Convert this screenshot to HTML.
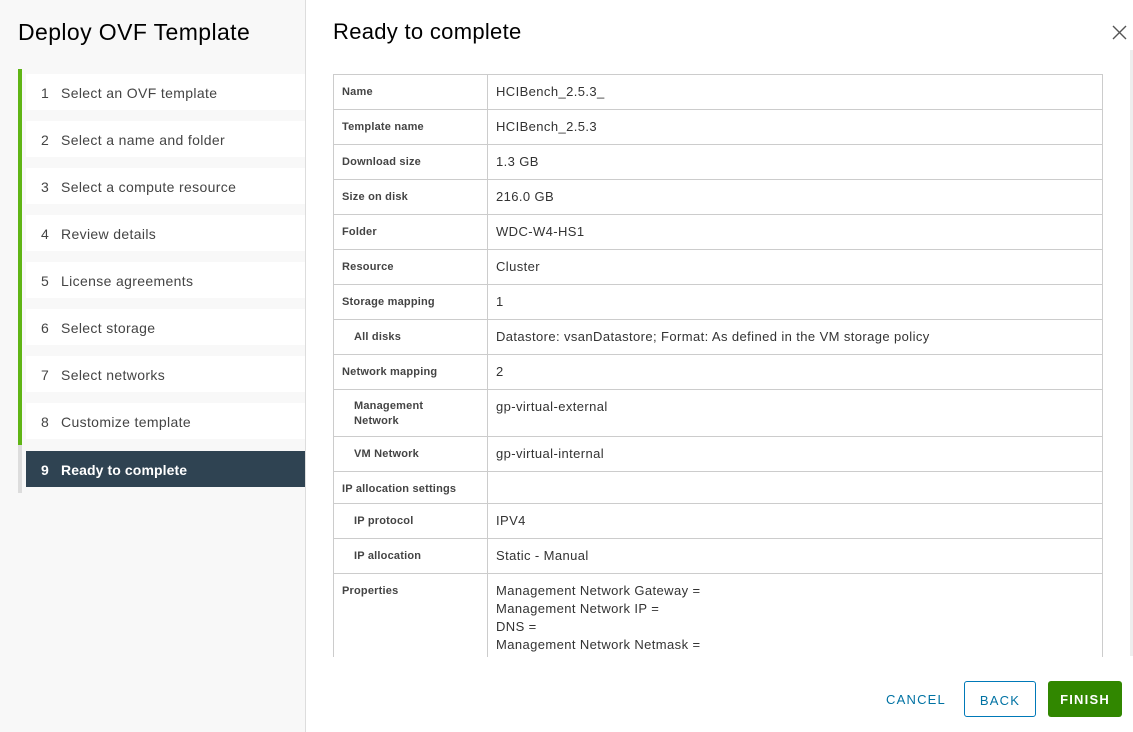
<!DOCTYPE html>
<html><head><style>
*{margin:0;padding:0;box-sizing:border-box}
body{width:1133px;height:732px;overflow:hidden;font-family:"Liberation Sans",sans-serif;background:#fff;position:relative;color:#333}
.left{position:absolute;left:0;top:0;width:306px;height:732px;background:#f8f8f8;border-right:1px solid #ddd}
.left h1{position:absolute;left:18px;top:19px;font-size:23px;font-weight:normal;color:#000;letter-spacing:0.4px}
.bar{position:absolute;left:18px;top:69px;width:4px;height:376px;background:#60b515}
.bar2{position:absolute;left:18px;top:445px;width:4px;height:48px;background:#ddd}
.step{position:absolute;left:26px;width:279px;height:36px;background:#fff;font-size:14px;color:#444;line-height:38px;padding-left:15px;letter-spacing:0.35px}
.step b{font-weight:normal;display:inline-block;width:20px}
.step.act{background:#2f4352;color:#fff;font-weight:bold;letter-spacing:0.1px}
.step.act b{font-weight:bold}
h2{position:absolute;left:333px;top:19px;font-size:22px;font-weight:normal;color:#000;letter-spacing:0.3px}
.x{position:absolute;left:1112px;top:25px}
table{position:absolute;left:333px;top:74px;width:770px;border-collapse:collapse;font-size:13px;letter-spacing:0.4px}
td{border:1px solid #ccc;vertical-align:top;padding:9px 8px 0}
td.l{width:154px;font-size:11px;font-weight:bold;color:#444;padding-top:11px;letter-spacing:0.2px}
td.l.i{padding-left:20px}
.clip{position:absolute;left:333px;top:74px;width:771px;height:583px;overflow:hidden}
.sb{position:absolute;left:1130px;top:50px;width:3px;height:606px;background:#eee}
.btn{position:absolute;top:681px;height:36px;font-size:13px;letter-spacing:1.2px;line-height:37px;text-align:center;border-radius:3px}
</style></head><body>
<div class="left">
<h1>Deploy OVF Template</h1>
<div class="bar"></div><div class="bar2"></div>
<div class="step" style="top:74px"><b>1</b>Select an OVF template</div>
<div class="step" style="top:121px"><b>2</b>Select a name and folder</div>
<div class="step" style="top:168px"><b>3</b>Select a compute resource</div>
<div class="step" style="top:215px"><b>4</b>Review details</div>
<div class="step" style="top:262px"><b>5</b>License agreements</div>
<div class="step" style="top:309px"><b>6</b>Select storage</div>
<div class="step" style="top:356px"><b>7</b>Select networks</div>
<div class="step" style="top:403px"><b>8</b>Customize template</div>
<div class="step act" style="top:451px"><b>9</b>Ready to complete</div>
</div>
<h2>Ready to complete</h2>
<svg class="x" width="15" height="15" viewBox="0 0 15 15"><path d="M1 1L14 14M14 1L1 14" stroke="#555" stroke-width="1.4"/></svg>
<div class="clip"><table style="left:0;top:0">
<tr style="height:35px"><td class="l">Name</td><td>HCIBench_2.5.3_</td></tr>
<tr style="height:35px"><td class="l">Template name</td><td>HCIBench_2.5.3</td></tr>
<tr style="height:35px"><td class="l">Download size</td><td>1.3 GB</td></tr>
<tr style="height:35px"><td class="l">Size on disk</td><td>216.0 GB</td></tr>
<tr style="height:35px"><td class="l">Folder</td><td>WDC-W4-HS1</td></tr>
<tr style="height:35px"><td class="l">Resource</td><td>Cluster</td></tr>
<tr style="height:35px"><td class="l">Storage mapping</td><td>1</td></tr>
<tr style="height:35px"><td class="l i">All disks</td><td>Datastore: vsanDatastore; Format: As defined in the VM storage policy</td></tr>
<tr style="height:35px"><td class="l">Network mapping</td><td>2</td></tr>
<tr style="height:47px"><td class="l i" style="line-height:15px;padding-top:9px">Management<br>Network</td><td>gp-virtual-external</td></tr>
<tr style="height:35px"><td class="l i">VM Network</td><td>gp-virtual-internal</td></tr>
<tr style="height:32px"><td class="l">IP allocation settings</td><td></td></tr>
<tr style="height:35px"><td class="l i">IP protocol</td><td>IPV4</td></tr>
<tr style="height:35px"><td class="l i">IP allocation</td><td>Static - Manual</td></tr>
<tr style="height:120px"><td class="l">Properties</td><td style="line-height:18px;padding-top:8px">Management Network Gateway =<br>Management Network IP =<br>DNS =<br>Management Network Netmask =<br>&nbsp;</td></tr>
</table></div>
<div class="sb"></div>
<div class="btn" style="left:874px;width:84px;color:#0072a3">CANCEL</div>
<div class="btn" style="left:964px;width:72px;border:1px solid #0079b8;color:#0072a3">BACK</div>
<div class="btn" style="left:1048px;width:74px;background:#318700;color:#fff;font-weight:bold">FINISH</div>
</body></html>
